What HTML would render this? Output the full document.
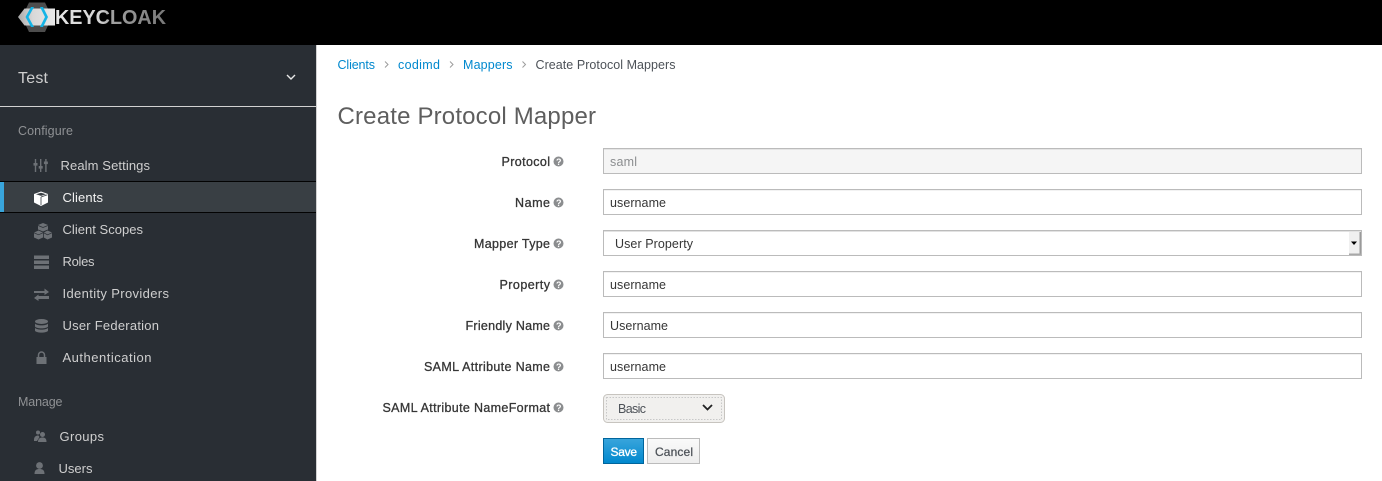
<!DOCTYPE html>
<html><head><meta charset="utf-8"><title>Keycloak</title>
<style>
html,body{margin:0;padding:0;background:#fff;width:1382px;height:481px;overflow:hidden}
svg{display:block}
text{font-family:"Liberation Sans",sans-serif;font-size:13px;white-space:pre}
.nav{fill:#cfcfcf}
.sec{fill:#8f9194;font-size:12.5px}
.lnk{fill:#0088ce;font-size:12.5px}
.lab{fill:#363636;stroke:#363636;stroke-width:.3px;font-size:12.5px}
.val{fill:#363636;font-size:12.5px}
.ic{fill:#6d7176}
.q{fill:#8b8d8f}
.qt{fill:#fff;font-size:9px;font-weight:bold}
.inp{fill:#fff;stroke:#bbb;stroke-width:1}
</style></head><body>
<svg width="1382" height="481" viewBox="0 0 1382 481" xmlns="http://www.w3.org/2000/svg">
<defs>
<linearGradient id="kc" gradientUnits="userSpaceOnUse" x1="55" x2="166" y1="0" y2="0"><stop offset="0" stop-color="#e6e6e6"/><stop offset=".4" stop-color="#d4d4d4"/><stop offset=".52" stop-color="#a0a0a0"/><stop offset="1" stop-color="#777"/></linearGradient>
<linearGradient id="hx" x1="0" x2="1" y1="0" y2="0"><stop offset="0" stop-color="#a9a9a9"/><stop offset=".4" stop-color="#d8d8d8"/><stop offset="1" stop-color="#e8e8e8"/></linearGradient>
<linearGradient id="sv" x1="0" x2="0" y1="0" y2="1"><stop offset="0" stop-color="#39a5dc"/><stop offset="1" stop-color="#0088ce"/></linearGradient>
<linearGradient id="cn" x1="0" x2="0" y1="0" y2="1"><stop offset="0" stop-color="#fafafa"/><stop offset="1" stop-color="#ededed"/></linearGradient>
</defs>
<!-- header -->
<rect x="0" y="0" width="1382" height="45" fill="#000"/>
<path d="M29 2.500H45L52 17L45 32H29L22 17Z" fill="#4d4d4d"/>
<path d="M18 17L24.500 8.500H55V25.500H24.500Z" fill="url(#hx)"/>
<path d="M31 7H34L28.500 17L34 27H31L25.500 17Z" fill="#14b4e6"/>
<path d="M40 7H43L48 17L43 27H40L45 17Z" fill="#14b4e6"/>
<text x="55" y="24" textLength="111" lengthAdjust="spacingAndGlyphs" style="font-size:20.5px;font-weight:bold" fill="url(#kc)">KEYCLOAK</text>
<!-- sidebar -->
<rect x="0" y="45" width="316" height="436" fill="#292e34"/>
<rect x="316" y="45" width="1" height="436" fill="#d1d1d1"/>
<text x="18" y="83" textLength="30" class="nav" style="font-size:16px">Test</text>
<path d="M287 75L291 79L295 75" fill="none" stroke="#e8e8e8" stroke-width="1.400"/>
<rect x="0" y="106" width="316" height="1" fill="#d1d1d1"/>
<text x="18" y="135" textLength="55" class="sec">Configure</text>
<text x="18" y="406" textLength="44.500" class="sec">Manage</text>
<rect x="0" y="181" width="316" height="32" fill="#393f44"/>
<rect x="0" y="181" width="316" height="1" fill="#030303"/>
<rect x="0" y="212" width="316" height="1" fill="#030303"/>
<rect x="0" y="182" width="4" height="30" fill="#39a5dc"/>
<!-- nav icons -->
<g class="ic">
<rect x="34.800" y="159" width="1.400" height="13"/><rect x="33.500" y="163" width="4" height="2.600"/>
<rect x="40" y="159" width="1.400" height="13"/><rect x="38.700" y="166" width="4" height="2.600"/>
<rect x="45.200" y="159" width="1.400" height="13"/><rect x="43.900" y="161.500" width="4" height="2.600"/>
</g>
<path d="M41 191.500L48 194V202.500L41 206L34 202.500V194Z" fill="#fff"/>
<path d="M36 194.300L41 192.800L46 194.300L41 195.900Z" fill="#393f44"/>
<path d="M41 197V205M41 197L47.500 194.800" fill="none" stroke="#393f44" stroke-width=".8"/>
<g class="ic">
<path d="M43 223L48 225V229.500L43 231.500L38 229.500V225Z"/>
<path d="M38.500 230.500L43 232.500V237.500L38.500 239.500L34 237.500V232.500Z"/>
<path d="M47.500 230.500L52 232.500V237.500L47.500 239.500L43.800 237.500V232.500Z"/>
</g>
<path d="M38 225.500L43 227.500L48 225.500M34 232.800L38.500 234.800L43 232.800M43.800 232.800L47.500 234.800L52 232.800" fill="none" stroke="#292e34" stroke-width=".7"/>
<g class="ic">
<rect x="34" y="255.500" width="15" height="3.500"/><rect x="34" y="260.500" width="15" height="3.500"/><rect x="34" y="265.500" width="15" height="3.500"/>
<path d="M34 291H44.500V288.500L49 292L44.500 295V293H34Z"/>
<path d="M49 296H38.500V294.500L34 298L38.500 301V299H49Z"/>
<ellipse cx="41.500" cy="321.500" rx="6.500" ry="2.500"/>
<path d="M35 323.500C36.500 326 46.500 326 48 323.500V326.500C46.500 329 36.500 329 35 326.500Z"/>
<path d="M35 327.800C36.500 330.300 46.500 330.300 48 327.800V330.800C46.500 333.300 36.500 333.300 35 330.800Z"/>
<path d="M36.500 357H46.500V364H36.500Z"/>
<path d="M38.500 357V355A3 3 0 0 1 44.500 355V357" fill="none" stroke="#6d7176" stroke-width="1.500"/>
<circle cx="38" cy="432.500" r="2"/><path d="M34 440C34 436.500 36 435.500 38.500 435.500L39.500 437L37 441H34Z"/>
<circle cx="42.500" cy="434.500" r="2.500"/><path d="M38 442C38 438.500 40 437.500 42.500 437.500C45 437.500 46.500 438.500 46.500 442Z"/>
<circle cx="39.500" cy="465.500" r="3.400"/><path d="M34.500 474C34.500 470 36.500 469 39.500 469C42.500 469 44.500 470 44.500 474Z"/>
</g>
<text x="60.500" y="170" textLength="89.500" class="nav">Realm Settings</text>
<text x="62.500" y="202" textLength="40.500" class="nav" style="fill:#f2f2f2">Clients</text>
<text x="62.500" y="234" textLength="80.500" class="nav">Client Scopes</text>
<text x="62.500" y="266" textLength="32" class="nav">Roles</text>
<text x="62.500" y="298" textLength="106.500" class="nav">Identity Providers</text>
<text x="62.500" y="330" textLength="96.500" class="nav">User Federation</text>
<text x="62.500" y="362" textLength="89" class="nav">Authentication</text>
<text x="59.500" y="441" textLength="44.500" class="nav">Groups</text>
<text x="58.500" y="473" textLength="34" class="nav">Users</text>
<!-- breadcrumb -->
<text x="337.500" y="69" textLength="37.500" class="lnk">Clients</text>
<text x="398" y="69" textLength="42" class="lnk">codimd</text>
<text x="463" y="69" textLength="49.500" class="lnk">Mappers</text>
<text x="535.500" y="69" textLength="140" class="val" style="fill:#4d5258">Create Protocol Mappers</text>
<path d="M385 61.500L388 64.500L385 67.500M450 61.500L453 64.500L450 67.500M522.500 61.500L525.500 64.500L522.500 67.500" fill="none" stroke="#9c9c9c" stroke-width="1"/>
<text x="337.500" y="124" textLength="258.500" style="font-size:24px;fill:#5e5e5e">Create Protocol Mapper</text>
<!-- labels -->
<text x="501.500" y="166" textLength="48.500" class="lab">Protocol</text>
<text x="515" y="207" textLength="35" class="lab">Name</text>
<text x="474" y="248" textLength="76" class="lab">Mapper Type</text>
<text x="499.500" y="289" textLength="50.500" class="lab">Property</text>
<text x="465.500" y="330" textLength="84.500" class="lab">Friendly Name</text>
<text x="424" y="371" textLength="126" class="lab">SAML Attribute Name</text>
<text x="382.500" y="412" textLength="167.500" class="lab">SAML Attribute NameFormat</text>
<g>
<circle class="q" cx="558.500" cy="161.500" r="5"/><text x="556" y="165" class="qt">?</text>
<circle class="q" cx="558.500" cy="202.500" r="5"/><text x="556" y="206" class="qt">?</text>
<circle class="q" cx="558.500" cy="243.500" r="5"/><text x="556" y="247" class="qt">?</text>
<circle class="q" cx="558.500" cy="284.500" r="5"/><text x="556" y="288" class="qt">?</text>
<circle class="q" cx="558.500" cy="325.500" r="5"/><text x="556" y="329" class="qt">?</text>
<circle class="q" cx="558.500" cy="366.500" r="5"/><text x="556" y="370" class="qt">?</text>
<circle class="q" cx="558.500" cy="407.500" r="5"/><text x="556" y="411" class="qt">?</text>
</g>
<!-- inputs -->
<rect x="603.500" y="148.500" width="758" height="25" class="inp" style="fill:#f5f5f5"/>
<rect x="603.500" y="189.500" width="758" height="25" class="inp"/>
<rect x="603.500" y="230.500" width="758" height="25" class="inp"/>
<rect x="603.500" y="271.500" width="758" height="25" class="inp"/>
<rect x="603.500" y="312.500" width="758" height="25" class="inp"/>
<rect x="603.500" y="353.500" width="758" height="25" class="inp"/>
<rect x="604" y="149" width="757" height="1" fill="#e4e4e4"/>
<rect x="604" y="190" width="757" height="1" fill="#f2f2f2"/>
<rect x="604" y="231" width="757" height="1" fill="#e2e2e2"/>
<rect x="604" y="272" width="757" height="1" fill="#f2f2f2"/>
<rect x="604" y="313" width="757" height="1" fill="#f2f2f2"/>
<rect x="604" y="354" width="757" height="1" fill="#f2f2f2"/>
<!-- select spinner -->
<rect x="1349" y="232" width="12" height="23" fill="#f0f0f0"/>
<rect x="1359.500" y="232" width="1.500" height="23" fill="#9a9a9a"/>
<rect x="1349" y="253.500" width="12" height="1.500" fill="#a8a8a8"/>
<path d="M1351 241.500H1357L1354 245Z" fill="#000"/>
<text x="610" y="166" textLength="27" class="val" style="fill:#8b8d8f">saml</text>
<text x="610" y="207" textLength="56" class="val">username</text>
<text x="615" y="248" textLength="78" class="val">User Property</text>
<text x="610" y="289" textLength="56" class="val">username</text>
<text x="610" y="330" textLength="58" class="val">Username</text>
<text x="610" y="371" textLength="56" class="val">username</text>
<!-- basic select -->
<rect x="603.500" y="394.500" width="121" height="28" rx="4" fill="#f1f0ee" stroke="#c7c4bf"/>
<rect x="606.500" y="397.500" width="115" height="22" fill="#f1f0ee" stroke="#c8c8c8" stroke-dasharray="1.500 1.500"/>
<text x="618" y="413" textLength="28" style="font-size:12.500px;fill:#4d5258">Basic</text>
<path d="M703 405L707.500 409.500L712 405" fill="none" stroke="#222" stroke-width="1.800"/>
<!-- buttons -->
<rect x="603.500" y="438.500" width="40" height="25" fill="url(#sv)" stroke="#00659c"/>
<text x="610.500" y="456" textLength="26.500" style="font-size:12px;fill:#fff;stroke:#fff;stroke-width:.3px">Save</text>
<rect x="647.500" y="438.500" width="52" height="25" fill="url(#cn)" stroke="#bbb"/>
<text x="655" y="456" textLength="38" style="font-size:12px;fill:#4d5258;stroke:#4d5258;stroke-width:.25px">Cancel</text>
</svg>
</body></html>
